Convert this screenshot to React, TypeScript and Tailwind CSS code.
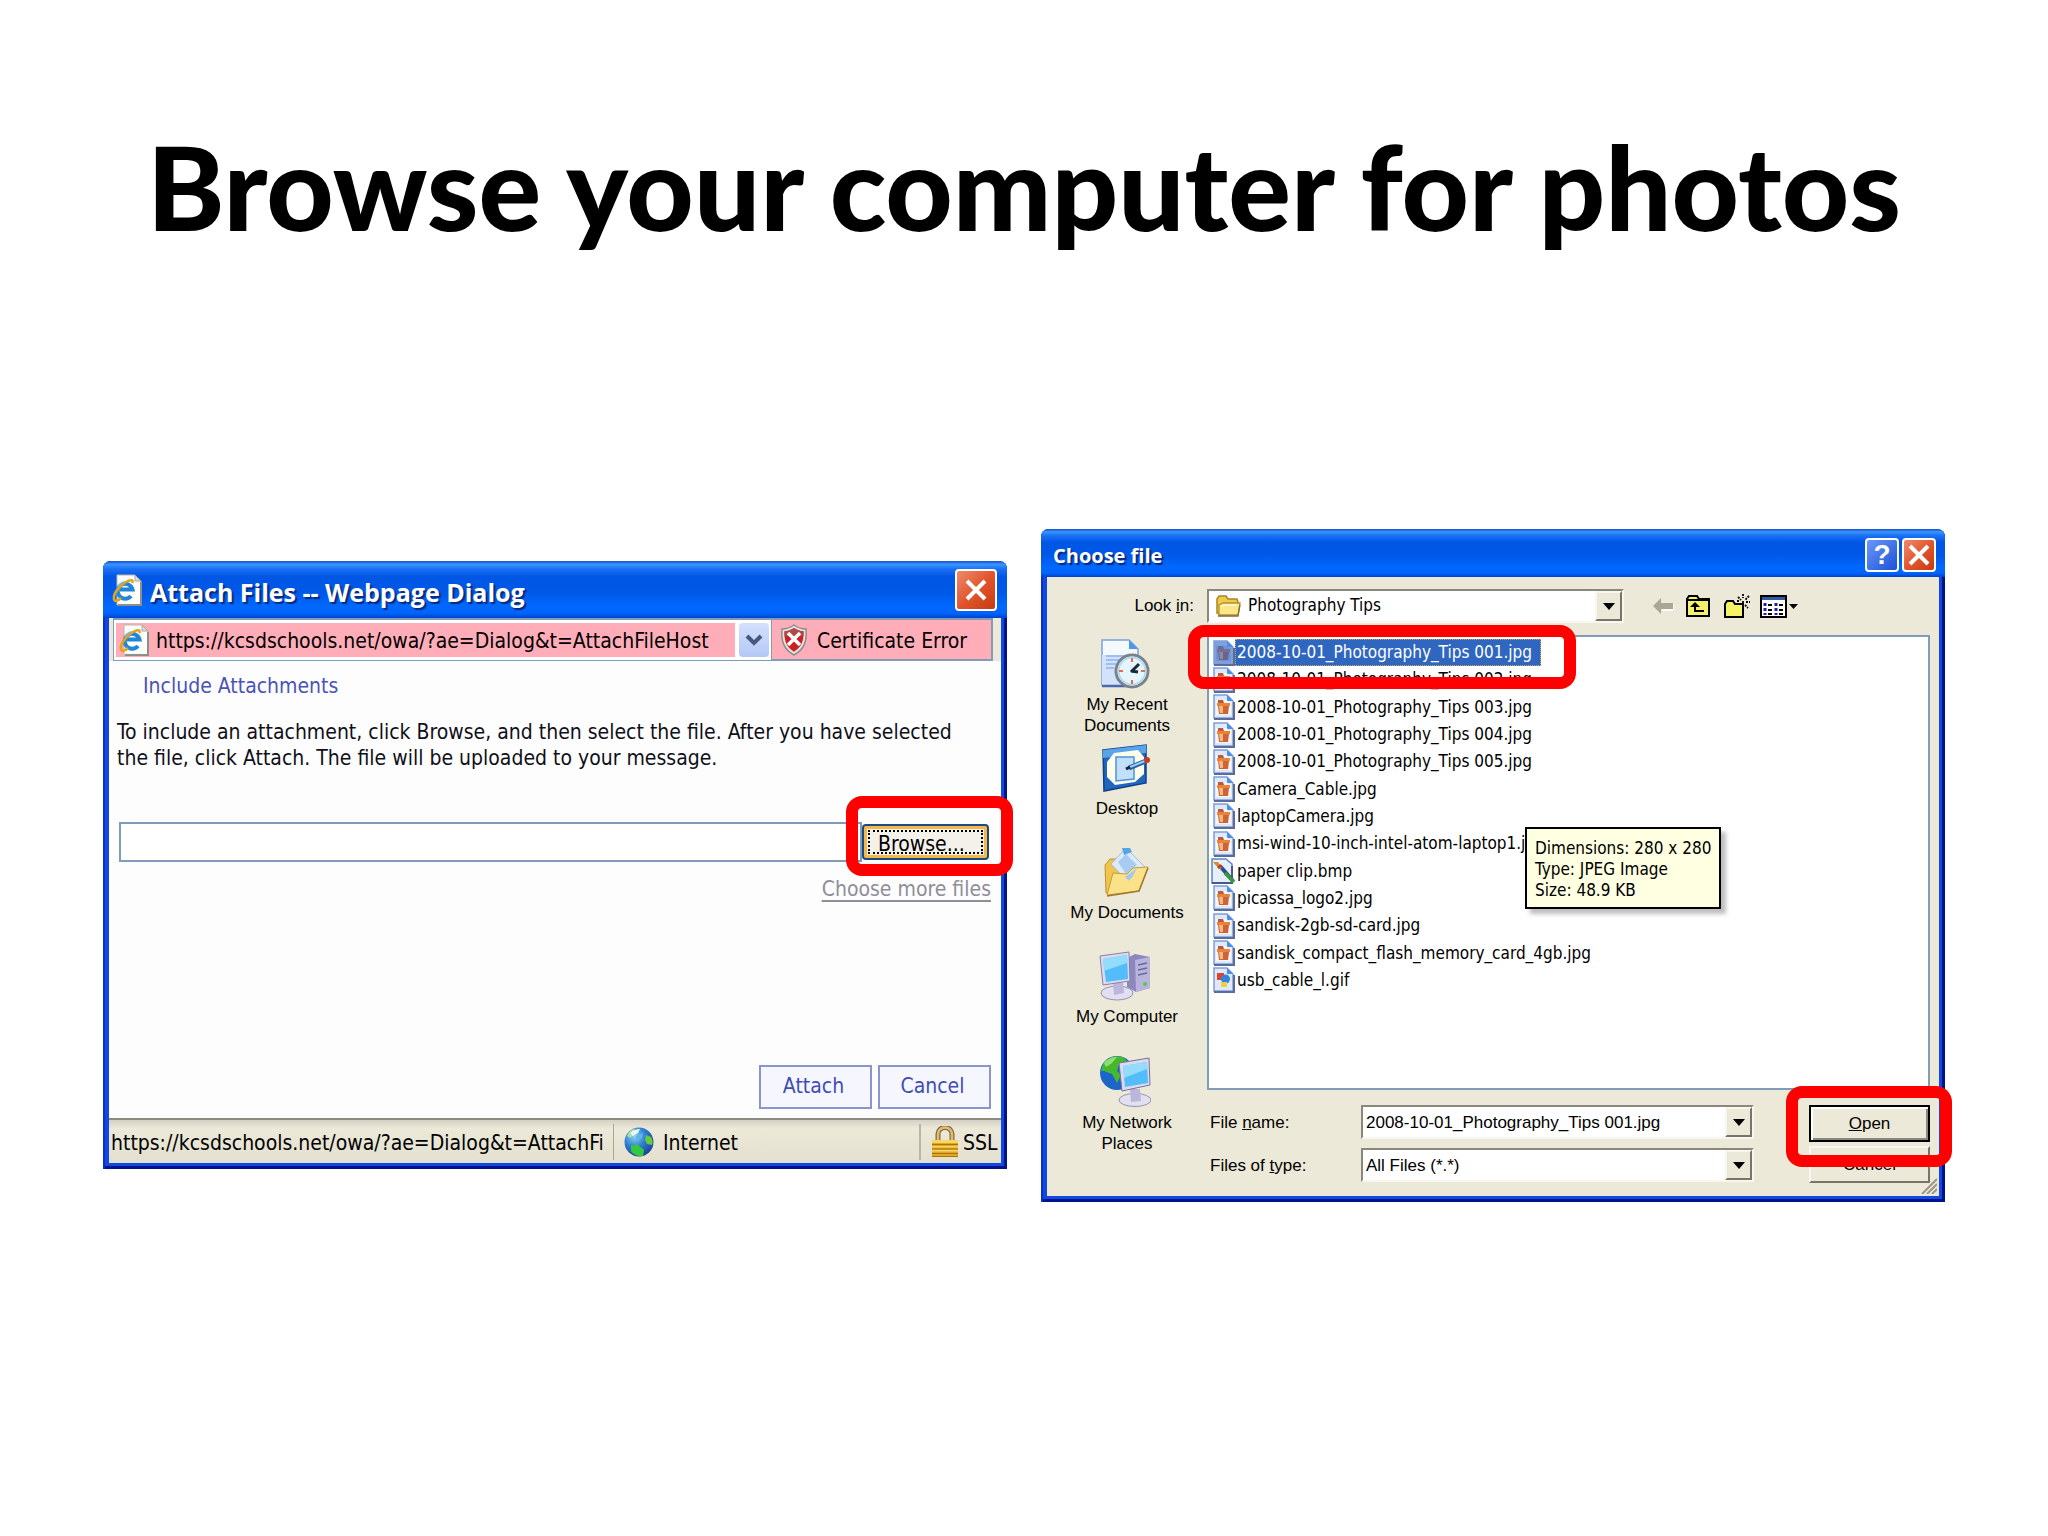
import React from 'react';
import clsx from 'clsx';

interface FileEntry {
  name: string;
  kind: 'jpg' | 'bmp' | 'gif';
}

interface Place {
  label: string;
  icon: React.FC;
}

const files: FileEntry[] = [
  { name: '2008-10-01_Photography_Tips 001.jpg', kind: 'jpg' },
  { name: '2008-10-01_Photography_Tips 002.jpg', kind: 'jpg' },
  { name: '2008-10-01_Photography_Tips 003.jpg', kind: 'jpg' },
  { name: '2008-10-01_Photography_Tips 004.jpg', kind: 'jpg' },
  { name: '2008-10-01_Photography_Tips 005.jpg', kind: 'jpg' },
  { name: 'Camera_Cable.jpg', kind: 'jpg' },
  { name: 'laptopCamera.jpg', kind: 'jpg' },
  { name: 'msi-wind-10-inch-intel-atom-laptop1.jpg', kind: 'jpg' },
  { name: 'paper clip.bmp', kind: 'bmp' },
  { name: 'picassa_logo2.jpg', kind: 'jpg' },
  { name: 'sandisk-2gb-sd-card.jpg', kind: 'jpg' },
  { name: 'sandisk_compact_flash_memory_card_4gb.jpg', kind: 'jpg' },
  { name: 'usb_cable_l.gif', kind: 'gif' },
];

const IePageIcon = () => (
  <svg viewBox="0 0 30 32" className="h-8 w-[30px] shrink-0">
    <path d="M5 1h18l6 6v24H5z" fill="#fdfdfd" stroke="#b9b9b0" strokeWidth="1" />
    <path d="M29 8v23H6" fill="none" stroke="#8f8f88" strokeWidth="2" />
    <path d="M23 1v6h6z" fill="#dcdcd6" stroke="#a9a9a2" strokeWidth="1" />
    <path d="M19 22a7.500 7.500 0 1 1 1.500-6.500H8" fill="none" stroke="#1f86d8" strokeWidth="4" />
    <path d="M6 13a8 8 0 0 1 8-5" fill="none" stroke="#6cc4f4" strokeWidth="1.500" />
    <path d="M20 9c2-3-1-4-6-1C7 12 1 20 2 25c.6 3 4 2 7-1" fill="none" stroke="#e2a324" strokeWidth="2.600" />
  </svg>
);

const CloseButton = ({ className }: { className: string }) => (
  <button
    aria-label="Close"
    className={clsx(
      'flex items-center justify-center rounded border-2 border-white bg-linear-135 from-[#ec8a6c] via-[#e2552c] to-[#c63a10]',
      className
    )}
  >
    <svg viewBox="0 0 24 24" className="h-6 w-6">
      <path d="M3 3l18 18M21 3L3 21" stroke="#fff" strokeWidth="4" />
    </svg>
  </button>
);

const ShieldIcon = () => (
  <svg viewBox="0 0 28 32" className="h-8 w-7 shrink-0">
    <path d="M14 1c4 3 8 4 12 4 1 11-1 20-12 26C3 25 1 16 2 5c4 0 8-1 12-4z" fill="#e4e4e4" stroke="#8c8c8c" strokeWidth="1.500" />
    <path d="M14 4c3 2 6 3 9.500 3.300.4 9-1.500 15.500-9.500 20.400C6 22.800 4.100 16.300 4.500 7.300 8 7 11 6 14 4z" fill="#cf2020" />
    <path d="M14 4c3 2 6 3 9.500 3.300v5H4.500v-5C8 7 11 6 14 4z" fill="#b04a48" />
    <path d="M8 9l12 12M20 9L8 21" stroke="#fff" strokeWidth="3.500" />
  </svg>
);

const GlobeIcon = () => (
  <svg viewBox="0 0 30 30" className="h-[30px] w-[30px] shrink-0">
    <defs>
      <radialGradient id="sea" cx="35%" cy="30%" r="75%">
        <stop offset="0" stopColor="#8fd0f4" />
        <stop offset="0.5" stopColor="#2f7fd0" />
        <stop offset="1" stopColor="#1b3f98" />
      </radialGradient>
    </defs>
    <circle cx="15" cy="15" r="14.500" fill="url(#sea)" />
    <path d="M3 9c1-3 4-6 7-7l3 2-3 4-4 3z" fill="#a8dca0" />
    <path d="M6 6c3-3 7-4 10-4l-2 4-5 3z" fill="#eaf8f4" />
    <path d="M22 8l5 2c2 3 2 6 1 8l-5-1-2-4z" fill="#62cc3c" />
    <path d="M7 19l6-2 7 6-1 6c-6 1-10-2-12-5z" fill="#34c840" />
    <path d="M12 9l7-3-1 5-5 4z" fill="#5cb4ec" />
  </svg>
);

const LockIcon = () => (
  <svg viewBox="0 0 28 32" className="h-8 w-7 shrink-0">
    <path d="M7 15V8a7 6.500 0 0 1 14 0v7" fill="none" stroke="#8a6a34" strokeWidth="5" />
    <path d="M7 15V8a7 6.500 0 0 1 14 0v7" fill="none" stroke="#dcbc78" strokeWidth="2.500" />
    <path d="M1 14h26v17H1z" fill="#e3a71e" />
    <path d="M1 14h26v3H1zM1 20h26v1.500H1zM1 24h26v1.500H1z" fill="#f6d668" />
    <path d="M1 18h26v1H1zM1 22.500h26v1H1zM1 27h26v1H1zM1 30h26v1H1z" fill="#a87414" />
  </svg>
);

const FolderIcon = () => (
  <svg viewBox="0 0 26 22" className="h-[22px] w-[26px] shrink-0">
    <path d="M2 18V4l2-3h7l2 3h9l1 3v12H4z" fill="#efca4c" stroke="#a98520" strokeWidth="1.500" />
    <path d="M4 20V10l4-2h17l-2 12z" fill="#fbe788" stroke="#b8922c" strokeWidth="1.300" />
    <path d="M6 12l3-2h13" stroke="#fffbd8" strokeWidth="1.500" fill="none" />
    <path d="M3 21h20l2-11" stroke="#7c6c3c" strokeWidth="1.300" fill="none" />
  </svg>
);

const FileIcon = ({ kind, selected }: { kind: FileEntry['kind']; selected: boolean }) => {
  if (kind === 'bmp') {
    return (
      <svg viewBox="0 0 24 26" className="-ml-[2px] h-[26px] w-6 shrink-0">
        <path d="M1 1h14l6 5v19H1z" fill="#e4eefc" stroke="#5f84c4" strokeWidth="1.500" />
        <path d="M1 25h20V8" fill="none" stroke="#4a5a80" strokeWidth="2" />
        <path d="M9 8l13 15" stroke="#2c4c94" strokeWidth="4" />
        <path d="M14 15l9 9" stroke="#3c9838" strokeWidth="3.500" />
        <path d="M2 4l5 0 4 6-3 1z" fill="#dc8a20" />
        <path d="M7 10l3-3" stroke="#c43c20" strokeWidth="2.500" />
      </svg>
    );
  }
  return (
    <svg viewBox="0 0 22 26" className="h-[26px] w-[22px] shrink-0">
      <path d="M1 1h13l6 6v17H1z" fill={selected ? '#7ea0dc' : '#dfe9fb'} stroke="#7c9edc" strokeWidth="1.500" />
      <path d="M21 8v17H1" fill="none" stroke="#5c6c98" strokeWidth="2" />
      <path d="M14 1v6h6z" fill="#4a90e4" />
      {kind === 'jpg' ? (
        <>
          <path d="M3 6h11l1 2h3v13H3z" fill={selected ? '#6f94d4' : '#f6f4f4'} />
          <path d="M5 6h5l1 3H5z" fill={selected ? '#5c70a4' : '#b8583c'} />
          <path d="M4 9h13v3H4z" fill={selected ? '#7c6c90' : '#ea8238'} />
          <path d="M5 12h11l-1 8H6z" fill={selected ? '#6c6490' : '#cc6434'} />
          <path d="M6 12h4v7H7z" fill={selected ? '#8c88a8' : '#f4b888'} />
        </>
      ) : (
        <>
          <path d="M4 6h7v7H4z" fill="#e04428" />
          <circle cx="12.500" cy="12" r="4.500" fill="#3084e0" />
          <path d="M8 15h6v5H8z" fill="#ecd23c" />
        </>
      )}
    </svg>
  );
};

const RecentIcon = () => (
  <svg viewBox="0 0 50 50" className="h-[50px] w-[50px]">
    <path d="M2 1h27l9 9v36H2z" fill="#f4f9ff" stroke="#7d9fe0" strokeWidth="1.500" />
    <path d="M2 16h30v30H2z" fill="#d2e2fa" />
    <path d="M6 17h22M6 21h14M6 25h10M6 29h8" stroke="#8fb4ee" strokeWidth="1.500" />
    <path d="M2 47h36" stroke="#4c68b0" strokeWidth="2.500" />
    <path d="M29 1v9h9z" fill="#4f96e8" />
    <circle cx="32" cy="32" r="16" fill="#e6f5fc" stroke="#7a8288" strokeWidth="3" />
    <circle cx="32" cy="32" r="13.500" fill="none" stroke="#b4dcf0" strokeWidth="2" />
    <path d="M32 19v4M32 41v4M19 32h4M41 32h4" stroke="#e0704c" strokeWidth="2" />
    <path d="M31 33l8-8M31 32l7 1" stroke="#16283c" strokeWidth="3" />
  </svg>
);

const DesktopIcon = () => (
  <svg viewBox="0 0 50 50" className="h-[50px] w-[50px]">
    <path d="M3 7l43-5v38L4 48z" fill="#1f66c0" stroke="#123f86" strokeWidth="1.500" />
    <path d="M3 7l43-5v8L3 15z" fill="#58a4ea" />
    <path d="M14 10l24-3 6 7v17l-9 8-20 3-8-8V19z" fill="#fdfdea" />
    <path d="M16 14h18v22l-18 2z" fill="#c2e0fa" stroke="#4a94dc" strokeWidth="1.500" />
    <path d="M29 25l17-7" stroke="#2660a8" strokeWidth="5" />
    <path d="M30 24l15-6" stroke="#9ccef4" strokeWidth="2" />
    <path d="M26 26l4-2" stroke="#1c2430" strokeWidth="3" />
    <circle cx="47" cy="17" r="3" fill="#c83a20" />
  </svg>
);

const DocumentsIcon = () => (
  <svg viewBox="0 0 50 50" className="h-[50px] w-[50px]">
    <path d="M5 18l5-6h8l4 6v28H6z" fill="#f0c44c" stroke="#c4922c" />
    <path d="M11 17L26 1l19 19-16 16z" fill="#dceafa" stroke="#a4bce0" />
    <path d="M18 15l8-8 11 11-11 9z" fill="#a8cbf4" />
    <path d="M22 1h8l2 4-8 3z" fill="#54a4e8" />
    <path d="M7 48l6-22 14 1 6-6 15-1-9 24z" fill="#fbe28a" stroke="#c89c38" />
    <path d="M25 30l12-9-4 8-4 5z" fill="#a4c8ee" />
    <path d="M7 49l32-5 9-23" fill="none" stroke="#a07a2c" strokeWidth="1.500" />
  </svg>
);

const ComputerIcon = () => (
  <svg viewBox="0 0 52 50" className="h-[50px] w-[52px]">
    <path d="M28 7l8-4 15 3v31l-14 4-9-5z" fill="#8d87c0" />
    <path d="M36 9l15-3v31l-14 4z" fill="#b8b4dc" />
    <path d="M39 14l9-2M39 19l9-2M39 24l9-2" stroke="#6c669c" strokeWidth="1.500" />
    <circle cx="46" cy="33" r="2" fill="#60c060" />
    <ellipse cx="18" cy="42" rx="16" ry="7" fill="#e2e0f0" stroke="#9490b4" />
    <path d="M14 31l10 0 1 11-10 2z" fill="#bcb6da" />
    <path d="M1 5l29-4 1 29-27 4z" fill="#dcdaf0" stroke="#8580ac" />
    <path d="M4 8l24-4 1 24-22 3z" fill="#52bdf8" />
    <path d="M4 8l24-4v8L5 20z" fill="#94dcfc" />
  </svg>
);

const NetworkIcon = () => (
  <svg viewBox="0 0 52 52" className="h-[52px] w-[52px]">
    <circle cx="18" cy="18" r="17" fill="#1d64c8" />
    <path d="M4 9C9 2 17 0 24 2l4 4-8 4-2 6 4 4-4 8-5-9-8-3-3 0z" fill="#46b830" />
    <path d="M5 8c4-5 9-6 13-6l-5 6-6 4z" fill="#90e070" />
    <ellipse cx="36" cy="45" rx="16" ry="6.500" fill="#e2e0f0" stroke="#9490b4" />
    <path d="M31 34l10 0 1 12-10 1z" fill="#bcb6da" />
    <path d="M20 8l30-5 1 27-28 6z" fill="#dcdaf0" stroke="#76709c" />
    <path d="M24 11l24-4 1 21-23 4z" fill="#52bdf8" />
    <path d="M24 11l24-4v7l-23 9z" fill="#94dcfc" />
  </svg>
);

const places: Place[] = [
  { label: 'My Recent Documents', icon: RecentIcon },
  { label: 'Desktop', icon: DesktopIcon },
  { label: 'My Documents', icon: DocumentsIcon },
  { label: 'My Computer', icon: ComputerIcon },
  { label: 'My Network Places', icon: NetworkIcon },
];

const ArrowBox = () => (
  <span className="flex w-[27px] shrink-0 items-center justify-center self-stretch border-2 border-t-[#f8f6ee] border-r-[#77756a] border-b-[#77756a] border-l-[#f8f6ee] bg-[#ece9d8]">
    <svg viewBox="0 0 12 7" className="h-[7px] w-3">
      <path d="M0 0h12L6 7z" fill="#000" />
    </svg>
  </span>
);

const Highlight = ({ className }: { className: string }) => (
  <div className={clsx('pointer-events-none absolute z-10 rounded-2xl border-[12px] border-[#fe0000]', className)} />
);

const titleBar =
  'flex items-center rounded-t-lg bg-[linear-gradient(#1450cc_0%,#3c94ff_6%,#1a70f4_14%,#0056e4_28%,#0058e8_55%,#0068ff_80%,#0064fa_92%,#0042cc_100%)]';
const frame = 'bg-[#1148e0] shadow-[inset_2px_0_0_#0a32c8,inset_-3px_-3px_0_#00138c] rounded-t-lg';
const sunken = 'border-2 border-t-[#8a887c] border-r-[#f8f6ee] border-b-[#f8f6ee] border-l-[#8a887c] bg-white';

const AttachDialog = () => (
  <section className={clsx('mt-8 min-w-0 font-["DejaVu_Sans_Condensed","Noto_Sans",sans-serif] text-[21px]', frame)}>
    <header className={clsx(titleBar, 'h-[57px] pr-[10px] pl-[9px]')}>
      <IePageIcon />
      <h2 className="ml-2 flex-1 pt-[6px] font-['Open_Sans',sans-serif] text-[25px] font-bold text-white [text-shadow:2px_2px_1px_#0a2a80]">
        Attach Files -- Webpage Dialog
      </h2>
      <CloseButton className="h-[42px] w-[42px]" />
    </header>

    <div className="mx-[6px] flex h-[43px] bg-[#ece9d8] pr-2 pl-1">
      <div className="flex min-w-0 flex-1 border border-t-2 border-[#7f9db9] bg-white py-[3px] pr-[2px] pl-[2px]">
        <div className="flex min-w-0 flex-1 items-center bg-[#ffaeb9] pl-[3px]">
          <IePageIcon />
          <input
            aria-label="Address"
            readOnly
            defaultValue="https://kcsdschools.net/owa/?ae=Dialog&t=AttachFileHost"
            className="ml-[7px] min-w-0 flex-1 bg-transparent pt-1 outline-none"
          />
        </div>
        <button
          aria-label="Show addresses"
          className="ml-1 flex w-[30px] items-center justify-center rounded-sm bg-linear-to-b from-[#d4e0fc] to-[#b4c8f6]"
        >
          <svg viewBox="0 0 18 12" className="h-3 w-[18px]">
            <path d="M2 2l7 7 7-7" fill="none" stroke="#46597c" strokeWidth="4" />
          </svg>
        </button>
      </div>
      <button className="flex w-[221px] items-center gap-[9px] border-2 border-l-0 border-[#7f9db9] bg-[#ffaeb9] pl-2">
        <ShieldIcon />
        <span className="pt-1">Certificate Error</span>
      </button>
    </div>

    <div className="mx-[6px] flex h-[457px] flex-col bg-[#fdfdfe] px-2 pt-[11px]">
      <h3 className="ml-[26px] leading-7 text-[#4a52b8]">Include Attachments</h3>
      <p className="mt-[19px] leading-[26px] text-[#101018]">
        To include an attachment, click Browse, and then select the file. After you have selected
        <br />
        the file, click Attach. The file will be uploaded to your message.
      </p>
      <div className="mt-[51px] flex h-10 items-center pr-1 pl-[2px]">
        <input aria-label="File to attach" className="h-10 min-w-0 flex-1 border-2 border-[#7f9db9] bg-white px-2" />
        <div className="relative">
          <button className="block h-9 w-[127px] rounded border-2 border-[#1c4a80] bg-[#f3f1ea] text-left shadow-[inset_0_0_0_3px_#f4b848]">
            <span className="mx-1 flex h-6 items-center border-2 border-dotted border-black pt-[6px] pl-2">
              Browse...
            </span>
          </button>
          <Highlight className="-top-[28px] -right-6 -bottom-[16px] -left-4" />
        </div>
      </div>
      <a href="#more" className="mt-[13px] mr-[2px] self-end leading-7 text-[#8e8e98] underline underline-offset-4">
        Choose more files
      </a>
      <div className="mt-auto mb-[9px] flex justify-end gap-[6px] pr-[2px] text-[#3f4cb8]">
        <button className="h-11 w-[113px] border-2 border-[#8c94cc] bg-[#f6f6fe] pr-1">Attach</button>
        <button className="h-11 w-[113px] border-2 border-[#8c94cc] bg-[#f6f6fe] pr-1">Cancel</button>
      </div>
    </div>

    <footer className="mx-[6px] flex h-[45px] items-center overflow-hidden border-t-2 border-[#8c8a80] bg-linear-to-b from-[#d4d1c4] via-[#ece9d8] via-20% to-[#e4e0d0] pl-[2px] whitespace-nowrap">
      <span className="min-w-0 flex-1 pt-1">https://kcsdschools.net/owa/?ae=Dialog&t=AttachFi</span>
      <span className="flex h-9 w-[306px] items-center gap-[9px] border-l border-[#a8a698] pl-[10px]">
        <GlobeIcon />
        <span className="pt-1">Internet</span>
      </span>
      <span className="flex h-9 w-[82px] items-center gap-1 border-l-2 border-[#b8b6a8] pl-[10px]">
        <LockIcon />
        <span className="pt-1">SSL</span>
      </span>
    </footer>
    <div className="h-[6px]" />
  </section>
);

const Toolbar = () => (
  <div className="ml-7 flex items-center">
    <button aria-label="Back" className="w-[33px]">
      <svg viewBox="0 0 22 18" className="h-[18px] w-[22px]">
        <path d="M1 9l8-8v5h12v6H9v5z" fill="#a9a797" />
        <path d="M10 13h12v-6" fill="none" stroke="#fff" strokeWidth="1.500" />
      </svg>
    </button>
    <button aria-label="Up one level" className="w-[38px]">
      <svg viewBox="0 0 26 24" className="h-6 w-[26px]">
        <path d="M2 5l2-3h8l2 3h10v17H2z" fill="#f6f268" stroke="#000" strokeWidth="2" />
        <path d="M2 6h22" stroke="#000" strokeWidth="2" />
        <path d="M10 10v7h9" fill="none" stroke="#000" strokeWidth="2" />
        <path d="M5 13l5-5 5 5z" fill="#000" />
      </svg>
    </button>
    <button aria-label="Create new folder" className="w-[37px]">
      <svg viewBox="0 0 28 26" className="h-[26px] w-7">
        <path d="M2 24V11l2-3h6l2 3h8v13z" fill="#f6f268" stroke="#000" strokeWidth="2" />
        <path d="M20 1v4M15 4l3 3M26 3l-4 4M23 9h4M22 12l3 3M14 8h3M20 8v3" stroke="#000" strokeWidth="1.800" strokeDasharray="2 1" />
      </svg>
    </button>
    <button aria-label="View menu">
      <svg viewBox="0 0 38 24" className="h-6 w-[38px]">
        <path d="M1 2h25v21H1z" fill="#fff" stroke="#000" strokeWidth="2" />
        <path d="M2 3h23v3H2z" fill="#2c5ca8" />
        <path d="M5 9v3M5 14v3M5 19v2M16 9v3M16 14v3M16 19v2" stroke="#2020a0" strokeWidth="3" />
        <path d="M8 11h4M8 16h4M8 20h4M19 11h4M19 16h4M19 20h4" stroke="#000" strokeWidth="1.800" />
        <path d="M29 10h9l-4.500 5z" fill="#000" />
      </svg>
    </button>
  </div>
);

const ChooseFileDialog = () => (
  <section className={clsx('min-w-0 font-["Liberation_Sans",sans-serif] text-[17px]', frame)}>
    <header className={clsx(titleBar, 'h-12 gap-[3px] pt-1 pr-[9px] pl-3')}>
      <h2 className="flex-1 pt-[2px] font-['Open_Sans',sans-serif] text-xl font-bold text-white [text-shadow:2px_2px_1px_#0a2a80]">
        Choose file
      </h2>
      <button
        aria-label="Help"
        className="h-[34px] w-[34px] rounded border-2 border-white bg-linear-135 from-[#6c96f8] to-[#1c50d8] text-[28px] leading-7 font-bold text-white"
      >
        ?
      </button>
      <CloseButton className="h-[34px] w-[34px]" />
    </header>

    <div className="relative mx-[6px] bg-[#ece9d8] pr-[9px] pb-[13px]">
      <div className="flex h-[58px] items-center">
        <label htmlFor="look-in" className="w-[147px] text-right">
          Look <u>i</u>n:
        </label>
        <div className={clsx('ml-[13px] flex h-[34px] w-[417px] items-center pl-[6px]', sunken)}>
          <FolderIcon />
          <select
            id="look-in"
            className="ml-[7px] min-w-0 flex-1 appearance-none bg-transparent font-['DejaVu_Sans_Condensed','Noto_Sans',sans-serif] outline-none"
          >
            <option>Photography Tips</option>
          </select>
          <ArrowBox />
        </div>
        <Toolbar />
      </div>

      <div className="flex">
        <nav className="w-40 shrink-0 pt-1 pr-1">
          {places.map(({ label, icon: Icon }) => (
            <a key={label} href="#place" className="mx-auto flex h-[104px] w-[130px] flex-col items-center text-center leading-[21px]">
              <Icon />
              <span className={clsx('mt-[5px] pl-1', label.length > 12 && 'w-[104px]')}>{label}</span>
            </a>
          ))}
        </nav>

        <div className="min-w-0 flex-1">
          <div className="relative h-[455px] border-2 border-[#7f9db9] bg-white pt-[2px] pl-1 font-['DejaVu_Sans_Condensed','Noto_Sans',sans-serif]">
            <ul className="grid h-[355px] auto-rows-fr">
              {files.map((file, i) => (
                <li key={file.name} className="flex items-center">
                  <FileIcon kind={file.kind} selected={i === 0} />
                  <span
                    className={clsx(
                      'border border-dotted px-px leading-[25px] whitespace-nowrap',
                      i === 0 ? 'border-[#d8a850] bg-[#2f66c0] pr-2 text-white' : 'border-transparent'
                    )}
                  >
                    {file.name}
                  </span>
                </li>
              ))}
            </ul>
            <Highlight className="-top-3 -left-[21px] h-16 w-[388px]" />
            <div
              role="tooltip"
              className="absolute top-[190px] left-[316px] w-[196px] border-2 border-black bg-[#ffffe1] px-2 pt-[9px] pb-[6px] leading-[21px] whitespace-nowrap shadow-[5px_5px_4px_#80808080]"
            >
              Dimensions: 280 x 280
              <br />
              Type: JPEG Image
              <br />
              Size: 48.9 KB
            </div>
          </div>

          <div className="mt-[15px] flex">
            <div className="flex-1 space-y-[9px]">
              <div className="flex h-[34px] items-center">
                <label htmlFor="file-name" className="w-[154px] pt-[2px] pl-[3px]">
                  File <u>n</u>ame:
                </label>
                <div className={clsx('flex h-[34px] w-[393px]', sunken)}>
                  <input
                    id="file-name"
                    defaultValue="2008-10-01_Photography_Tips 001.jpg"
                    className="min-w-0 flex-1 pt-[2px] pl-[3px] outline-none"
                  />
                  <ArrowBox />
                </div>
              </div>
              <div className="flex h-[34px] items-center">
                <label htmlFor="file-type" className="w-[154px] pt-[2px] pl-[3px]">
                  Files of <u>t</u>ype:
                </label>
                <div className={clsx('flex h-[34px] w-[393px]', sunken)}>
                  <select id="file-type" className="min-w-0 flex-1 appearance-none pt-[2px] pl-[3px] outline-none">
                    <option>All Files (*.*)</option>
                  </select>
                  <ArrowBox />
                </div>
              </div>
            </div>
            <div className="relative flex w-[121px] flex-col gap-1">
              <button className="h-[37px] border-2 border-black bg-[#ece9d8] shadow-[inset_2px_2px_0_#fff,inset_-2px_-2px_0_#8a887c]">
                <u>O</u>pen
              </button>
              <button className="h-[37px] border-2 border-t-[#f8f6ee] border-r-[#77756a] border-b-[#77756a] border-l-[#f8f6ee] bg-[#ece9d8]">
                Cancel
              </button>
              <Highlight className="-top-[19px] -right-[22px] -left-[23px] h-[81px]" />
            </div>
          </div>
        </div>
      </div>

      <svg viewBox="0 0 16 16" className="absolute right-[2px] bottom-[2px] h-4 w-4">
        <path d="M1 16L16 1M6 16L16 6M11 16l5-5" stroke="#9a988a" strokeWidth="2" />
      </svg>
    </div>
    <div className="h-[6px]" />
  </section>
);

const App: React.FC = () => {
  return (
    <main className="min-h-screen bg-white text-black">
      <h1 className="pt-[113px] text-center font-['Lato',sans-serif] text-[117px] leading-[146px] font-black">
        Browse your computer for photos
      </h1>
      <div className="mt-[270px] grid grid-cols-2 items-start gap-[34px] px-[103px]">
        <AttachDialog />
        <ChooseFileDialog />
      </div>
    </main>
  );
};

export default App;
